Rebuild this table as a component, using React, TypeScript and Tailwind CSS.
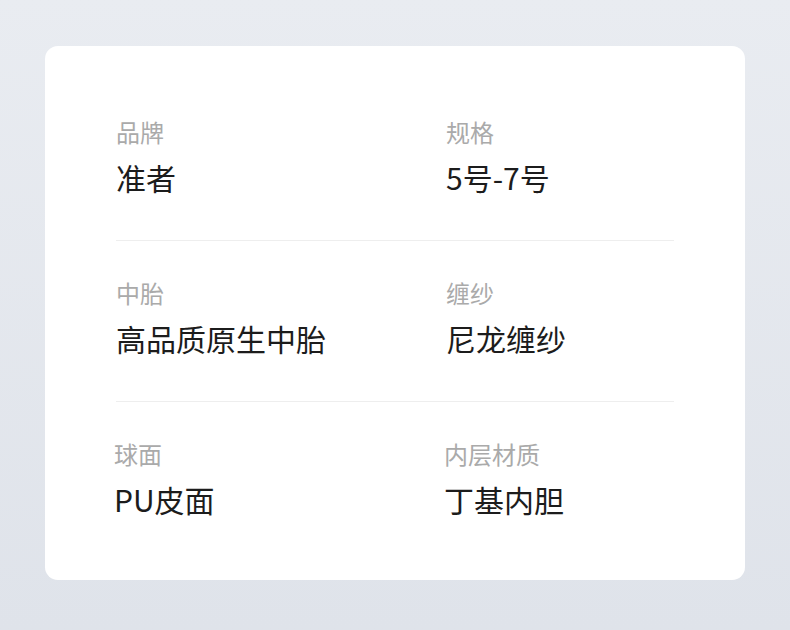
const rows = [
  [
    { label: '品牌', value: '准者' },
    { label: '规格', value: '5号-7号' },
  ],
  [
    { label: '中胎', value: '高品质原生中胎' },
    { label: '缠纱', value: '尼龙缠纱' },
  ],
  [
    { label: '球面', value: 'PU皮面' },
    { label: '内层材质', value: '丁基内胆' },
  ],
]

export default function App() {
  return (
    <div
      className="w-[790px] h-[630px] bg-gradient-to-b from-[#e9ecf1] to-[#dfe3ea] pt-[46px] px-[45px]"
      style={{ fontFamily: '"Noto Sans CJK SC", "Noto Sans", sans-serif' }}
    >
      <div className="bg-white rounded-[13px] h-[534px] px-[71px] pt-[34px]">
        {rows.map((row, i) => (
          <div
            key={i}
            className={`grid grid-cols-[330px_1fr] pt-[36px] pb-[43px] ${i < rows.length - 1 ? 'border-b border-[#eeeeee]' : ''} ${i === 2 ? '-ml-[2px]' : ''}`}
          >
            {row.map(item => (
              <div key={item.label}>
                <div className="text-[24px] leading-[32px] text-[#aaaaaa]">{item.label}</div>
                <div className="mt-[9px] text-[30px] leading-[40px] text-[#1c1c1c]">{item.value}</div>
              </div>
            ))}
          </div>
        ))}
      </div>
    </div>
  )
}
